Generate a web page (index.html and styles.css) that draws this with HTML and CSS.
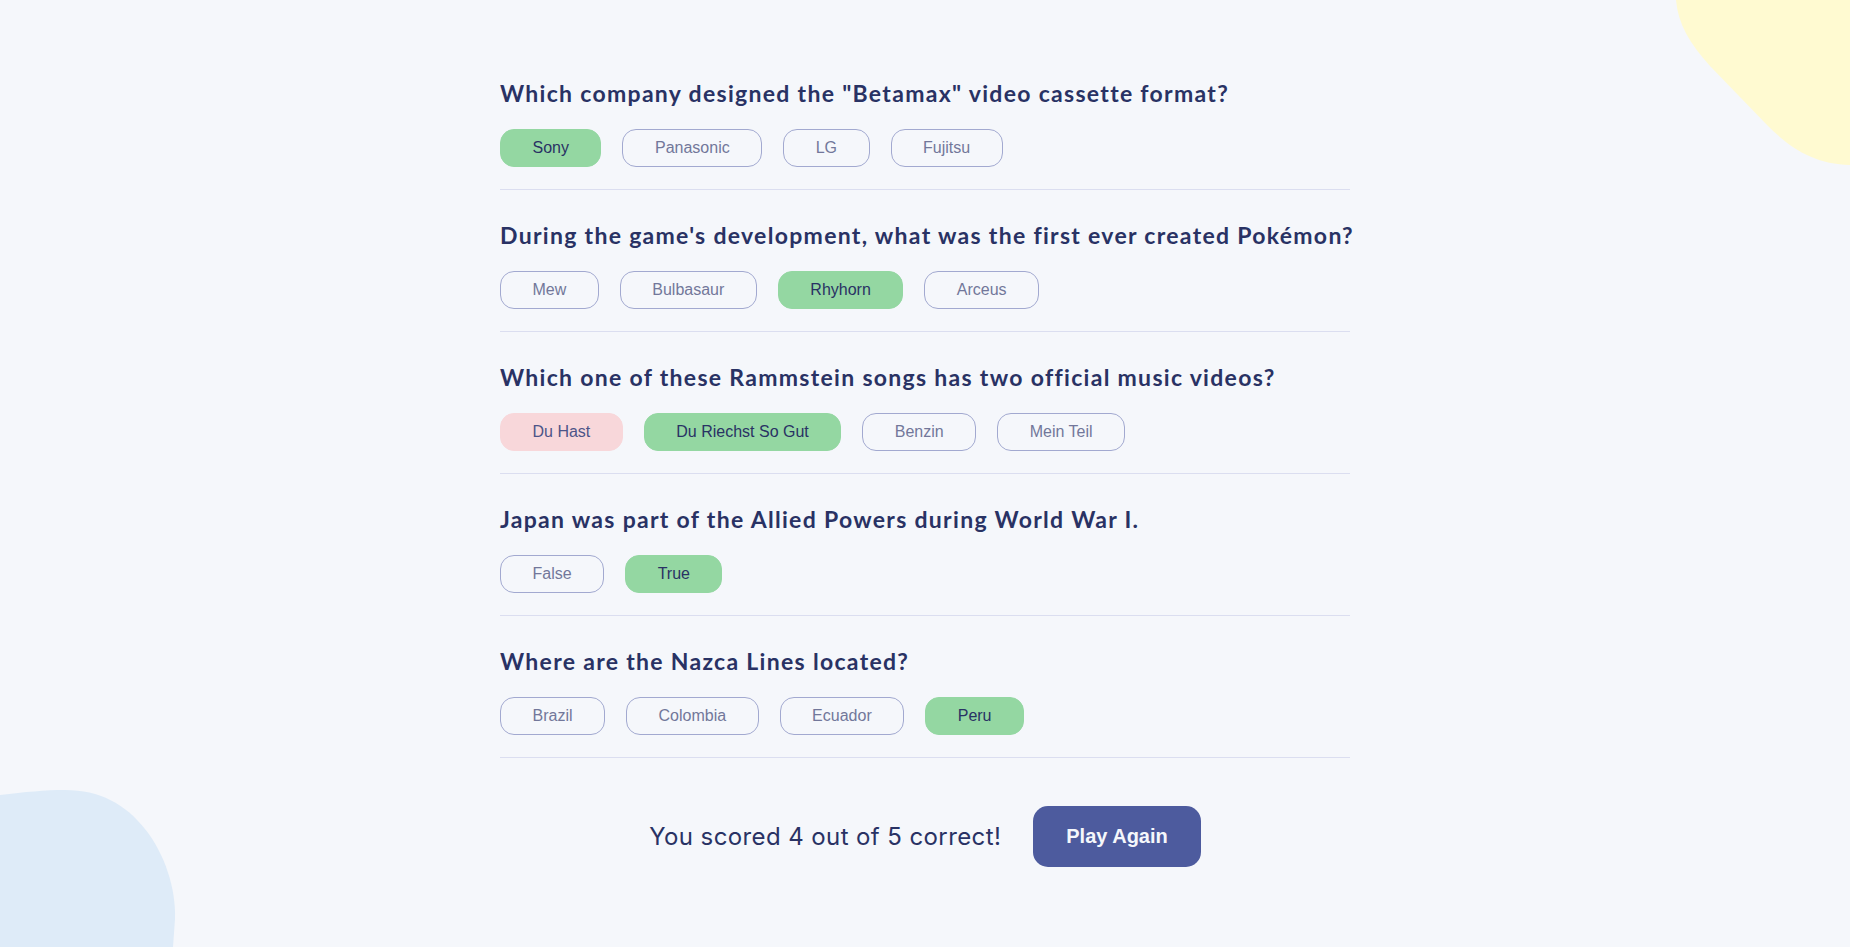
FILE: index.html
```html
<!DOCTYPE html>
<html lang="en">
<head>
<meta charset="utf-8">
<title>Quizzical</title>
<link rel="stylesheet" href="styles.css">
</head>
<body>
<svg class="blob blob-yellow" width="174" height="166" viewBox="0 0 174 166" aria-hidden="true">
  <path d="M0,0 C2,24 14,44 34,66 L92,126 C116,150 140,164 174,165 L174,0 Z" fill="#FFFAD1"/>
</svg>
<svg class="blob blob-blue" width="176" height="158" viewBox="0 0 176 158" aria-hidden="true">
  <path d="M0,6 C25,3 45,1 65,1 C100,1 125,15 145,40 C165,65 176,100 175,130 L173,158 L0,158 Z" fill="#DEEBF8"/>
</svg>
<main class="quiz">
  <section class="question">
    <h2 class="question-title">Which company designed the "Betamax" video cassette format?</h2>
    <div class="answers">
      <button class="answer correct">Sony</button>
      <button class="answer dim">Panasonic</button>
      <button class="answer dim">LG</button>
      <button class="answer dim">Fujitsu</button>
    </div>
  </section>
  <section class="question">
    <h2 class="question-title">During the game's development, what was the first ever created Pokémon?</h2>
    <div class="answers">
      <button class="answer dim">Mew</button>
      <button class="answer dim">Bulbasaur</button>
      <button class="answer correct">Rhyhorn</button>
      <button class="answer dim">Arceus</button>
    </div>
  </section>
  <section class="question">
    <h2 class="question-title">Which one of these Rammstein songs has two official music videos?</h2>
    <div class="answers">
      <button class="answer wrong">Du Hast</button>
      <button class="answer correct">Du Riechst So Gut</button>
      <button class="answer dim">Benzin</button>
      <button class="answer dim">Mein Teil</button>
    </div>
  </section>
  <section class="question">
    <h2 class="question-title">Japan was part of the Allied Powers during World War I.</h2>
    <div class="answers">
      <button class="answer dim">False</button>
      <button class="answer correct">True</button>
    </div>
  </section>
  <section class="question">
    <h2 class="question-title">Where are the Nazca Lines located?</h2>
    <div class="answers">
      <button class="answer dim">Brazil</button>
      <button class="answer dim">Colombia</button>
      <button class="answer dim">Ecuador</button>
      <button class="answer correct">Peru</button>
    </div>
  </section>
  <div class="result">
    <p class="score">You scored 4 out of 5 correct!</p>
    <button class="play-again">Play Again</button>
  </div>
</main>
</body>
</html>
```

FILE: styles.css
```css
html, body {
  margin: 0;
  padding: 0;
}
body {
  position: relative;
  min-height: 100vh;
  overflow: hidden;
  background: #F5F7FB;
  color: #293264;
  font-family: "Liberation Sans", Arial, sans-serif;
}
.blob {
  position: absolute;
  display: block;
}
.blob-yellow {
  top: 0;
  right: 0;
}
.blob-blue {
  left: 0;
  bottom: 0;
}
.quiz {
  position: relative;
  width: 850px;
  margin: 0 auto;
  padding-top: 79px;
}
.question {
  padding: 31px 0 22px;
  border-bottom: 1px solid #DBDEF0;
}
.question:first-child {
  padding-top: 0;
}
.question-title {
  margin: 0 0 22px;
  font-family: Lato, "Noto Sans", sans-serif;
  font-weight: 700;
  font-size: 23px;
  line-height: 28px;
  letter-spacing: 1.3px;
  color: #293264;
  white-space: nowrap;
}
.answers {
  display: flex;
  gap: 21px;
}
.answer {
  font-family: "Liberation Sans", Arial, sans-serif;
  font-size: 16px;
  line-height: 18px;
  padding: 9px 31.5px;
  border: 1px solid #A2A9D0;
  border-radius: 14px;
  background: transparent;
  color: #72779A;
}
.answer.correct {
  background: #94D7A2;
  border-color: #94D7A2;
  color: #293264;
}
.answer.wrong {
  background: #F8D7DA;
  border-color: #F8D7DA;
  color: #4D5488;
}
.result {
  display: flex;
  justify-content: center;
  align-items: center;
  gap: 32px;
  margin-top: 48px;
}
.score {
  margin: 0;
  font-family: Inter, "Noto Sans", sans-serif;
  font-size: 24px;
  letter-spacing: 0.4px;
  color: #293264;
}
.play-again {
  font-family: "Liberation Sans", Arial, sans-serif;
  font-weight: 700;
  font-size: 20px;
  line-height: 23px;
  padding: 19px 33px;
  border: none;
  border-radius: 15px;
  background: #4D5B9E;
  color: #F5F7FB;
}
```
